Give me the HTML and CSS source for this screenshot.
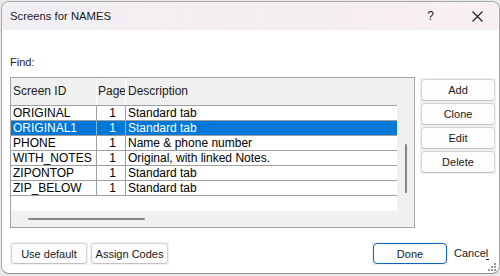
FILE: index.html
```html
<!DOCTYPE html>
<html>
<head>
<meta charset="utf-8">
<link rel="stylesheet" href="styles.css">
</head>
<body>
<div class="window">
  <div class="titlebar">
    <span class="title">Screens for NAMES</span>
    <span class="help">?</span>
    <svg class="close" width="11" height="11" viewBox="0 0 11 11"><path d="M0.5 0.5 L10.5 10.5 M10.5 0.5 L0.5 10.5" stroke="#1a1a1a" stroke-width="1.1" fill="none"/></svg>
  </div>
  <div class="content">
    <div class="find">Find:</div>
    <div class="main">
      <div class="list">
        <div class="list-main">
          <div class="row header"><div class="c1">Screen ID</div><div class="c2">Page</div><div class="c3">Description</div></div>
          <div class="row"><div class="c1">ORIGINAL</div><div class="c2">1</div><div class="c3">Standard tab</div></div>
          <div class="row selected"><div class="c1">ORIGINAL1</div><div class="c2">1</div><div class="c3">Standard tab</div></div>
          <div class="row"><div class="c1">PHONE</div><div class="c2">1</div><div class="c3">Name &amp; phone number</div></div>
          <div class="row"><div class="c1">WITH_NOTES</div><div class="c2">1</div><div class="c3">Original, with linked Notes.</div></div>
          <div class="row"><div class="c1">ZIPONTOP</div><div class="c2">1</div><div class="c3">Standard tab</div></div>
          <div class="row"><div class="c1">ZIP_BELOW</div><div class="c2">1</div><div class="c3">Standard tab</div></div>
          <div class="filler"></div>
          <div class="hscroll"><div class="hthumb"></div></div>
        </div>
        <div class="vscroll"><div class="vthumb"></div></div>
      </div>
      <div class="side">
        <button class="btn">Add</button>
        <button class="btn">Clone</button>
        <button class="btn">Edit</button>
        <button class="btn">Delete</button>
      </div>
    </div>
    <div class="bottom">
      <div class="bwrap w-use"><button class="btn">Use default</button></div>
      <div class="bwrap w-assign"><button class="btn">Assign Codes</button></div>
      <div class="bwrap w-done"><button class="btn done">Done</button></div>
      <span class="cancel">Cance<span class="ul">l</span></span>
    </div>
  </div>
  <svg class="grip" width="9" height="9" viewBox="0 0 9 9">
    <rect x="6" y="0" width="2" height="2" fill="#9a9a9a"/>
    <rect x="3" y="3" width="2" height="2" fill="#9a9a9a"/>
    <rect x="6" y="3" width="2" height="2" fill="#9a9a9a"/>
    <rect x="0" y="6" width="2" height="2" fill="#9a9a9a"/>
    <rect x="3" y="6" width="2" height="2" fill="#9a9a9a"/>
    <rect x="6" y="6" width="2" height="2" fill="#9a9a9a"/>
  </svg>
</div>
</body>
</html>
```
FILE: styles.css
```css
* { box-sizing: border-box; }
html, body { margin: 0; padding: 0; }
body {
  background: #e9e9e9;
  font-family: "Liberation Sans", Arial, sans-serif;
  width: 500px;
  height: 276px;
  overflow: hidden;
}
.window {
  position: relative;
  margin: 1px 0 0 1px;
  width: 499px;
  height: 273px;
  border: 1px solid #a8a8a8;
  border-bottom-color: #8f8f8f;
  border-radius: 8px;
  background: #ffffff;
  overflow: hidden;
}
.titlebar {
  height: 28px;
  display: flex;
  align-items: center;
  background: linear-gradient(90deg, #f1eff4 0%, #f5eef1 60%, #f7eff1 100%);
  padding-left: 8px;
}
.title {
  font-size: 11.3px;
  color: #1a1a1a;
}
.help {
  margin-left: auto;
  font-size: 12px;
  color: #1a1a1a;
  margin-right: 38px;
}
.close {
  margin-right: 16px;
  display: block;
}
.content {
  padding-left: 8px;
}
.find {
  margin-top: 25px;
  font-size: 11px;
  line-height: 14px;
  color: #1b1b1b;
}
.main {
  margin-top: 8px;
  display: flex;
  align-items: flex-start;
}
.list {
  width: 405px;
  height: 151px;
  border: 1px solid #a3a3a3;
  display: flex;
}
.list-main {
  width: 386px;
  display: flex;
  flex-direction: column;
}
.row {
  display: flex;
  font-size: 12px;
  line-height: 14px;
  color: #000;
  border-bottom: 1px solid #a0a0a0;
  height: 15px;
  white-space: nowrap;
}
.row > div { overflow: hidden; }
.c1 { width: 86px; padding-left: 2px; border-right: 1px solid #a0a0a0; }
.c2 { width: 29px; text-align: right; padding-right: 9px; border-right: 1px solid #a0a0a0; }
.c3 { width: 271px; padding-left: 2px; }
.row.header {
  height: 28px;
  background: #f0f0f0;
  align-items: center;
  border-bottom: 1px solid #a0a0a0;
  color: #1a1a1a;
}
.row.header > div {
  height: 27px;
  line-height: 27px;
  border-right-color: #ffffff;
}
.row.header .c2 { text-align: left; padding: 0 0 0 1px; }
.row.header .c3 { border-right: none; }
.row.selected {
  background: #0078d7;
  color: #ffffff;
}
.row.selected .c1, .row.selected .c2 { border-right-color: #8ab8e6; }
.filler { height: 15px; }
.hscroll {
  height: 16px;
  background: #f0f0f0;
  padding: 7px 0 0 17px;
}
.hthumb {
  width: 117px;
  height: 2px;
  background: #868686;
  border-radius: 1px;
}
.vscroll {
  width: 17px;
  background: #f0f0f0;
  padding: 66px 0 0 8px;
}
.vthumb {
  width: 2px;
  height: 49px;
  background: #868686;
  border-radius: 1px;
}
.side {
  margin-left: 5px;
  margin-top: 1px;
  width: 76px;
  padding: 1px;
  background: #f0f0f0;
  display: flex;
  flex-direction: column;
  gap: 2px;
}
.btn {
  font-family: "Liberation Sans", Arial, sans-serif;
  font-size: 11px;
  color: #1a1a1a;
  background: #fdfdfd;
  border: 1px solid #d3d3d3;
  border-bottom-color: #c2c2c2;
  border-radius: 4px;
  padding: 0;
  margin: 0;
  height: 22px;
  width: 100%;
}
.bottom {
  margin-top: 14px;
  display: flex;
  align-items: center;
}
.bwrap {
  background: #f0f0f0;
  padding: 1px;
}
.bwrap .btn { height: 21px; }
.w-use { width: 78px; }
.w-assign { width: 79px; margin-left: 2px; }
.w-done { width: 76px; margin-left: auto; }
.btn.done {
  border: 1px solid #0f66c0;
  box-shadow: inset 0 0 0 1px #ffffff;
}
.cancel {
  width: 45px;
  margin-left: 6px;
  font-size: 11px;
  color: #1a1a1a;
  line-height: 21px;
  white-space: nowrap;
}
.ul {
  border-bottom: 1px solid #1a1a1a;
  padding-right: 1px;
}
.grip {
  position: absolute;
  right: 2px;
  bottom: 1px;
}
```
